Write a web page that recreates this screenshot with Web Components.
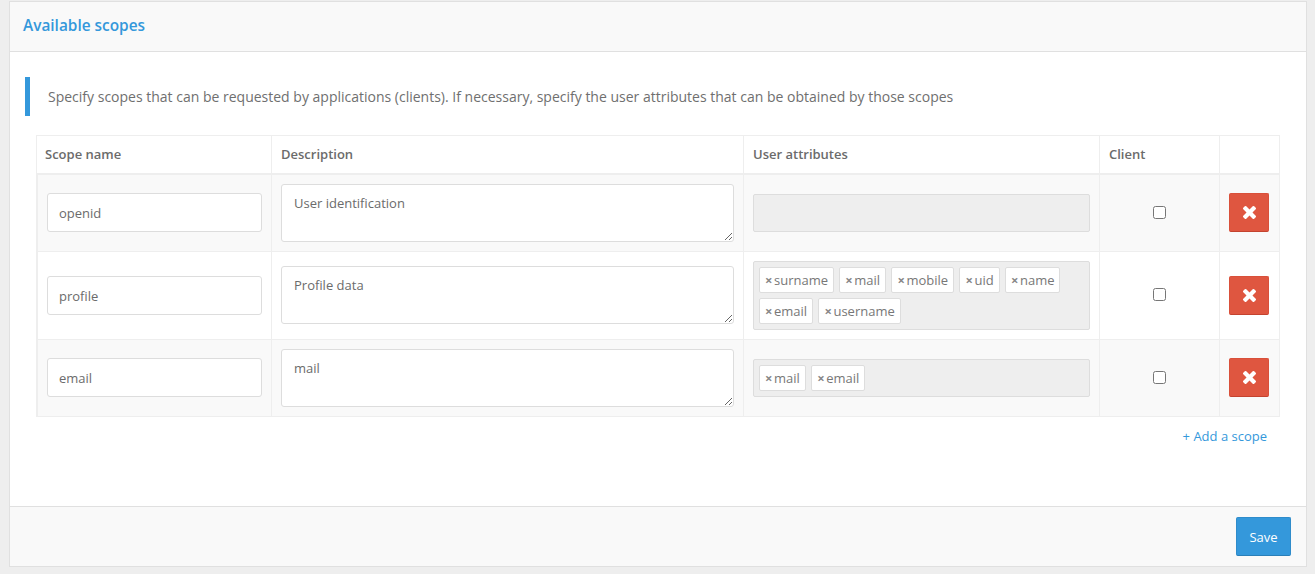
<!DOCTYPE html>
<html>
<head>
<meta charset="utf-8">
<title>Available scopes</title>
<style>
  html, body { margin: 0; background: #eee; }
  body { padding: 1px 8px 0 9px; height: 573px; box-sizing: border-box; overflow: hidden; font: 13px "Open Sans", sans-serif; color: #6b6b6b; }
</style>
</head>
<body>
<scope-panel heading="Available scopes">
  <scope-callout>Specify scopes that can be requested by applications (clients). If necessary, specify the user attributes that can be obtained by those scopes</scope-callout>
  <scope-table>
    <scope-row name="openid" description="User identification" height="77" striped></scope-row>
    <scope-row name="profile" description="Profile data" attrs="surname,mail,mobile,uid,name,email,username" height="88" tall></scope-row>
    <scope-row name="email" description="mail" attrs="mail,email" height="76" striped></scope-row>
  </scope-table>
  <a slot="link" href="#">+ Add a scope</a>
  <button slot="footer">Save</button>
</scope-panel>

<script>
const COLUMNS = "234px 472px 356px 120px 60px";

class ScopePanel extends HTMLElement {
  constructor() {
    super();
    this.attachShadow({ mode: "open" });
  }

  connectedCallback() {
    this.shadowRoot.innerHTML = `
    <style>
      :host {
        display: flex;
        flex-direction: column;
        height: 566px;
        box-sizing: border-box;
        border: 1px solid #e0e0e0;
        background: #fff;
      }
      header {
        height: 50px;
        box-sizing: border-box;
        flex: none;
        padding: 0 13px 2px;
        display: flex;
        align-items: center;
        background: #f9f9f9;
        border-bottom: 1px solid #e0e0e0;
        color: #3498db;
        font-size: 15.4px;
        font-weight: 600;
      }
      .body {
        flex: 1;
        padding: 25px 26px 0 15px;
      }
      .link {
        display: flex;
        justify-content: flex-end;
        padding: 10px 13px 0 0;
      }
      ::slotted(a) {
        color: #3498db;
        text-decoration: none;
        font-size: 13px;
      }
      footer {
        height: 60px;
        box-sizing: border-box;
        flex: none;
        display: flex;
        justify-content: flex-end;
        align-items: center;
        padding: 0 15px 0 0;
        background: #f9f9f9;
        border-top: 1px solid #e0e0e0;
      }
      ::slotted(button) {
        width: 55px;
        height: 39px;
        padding: 0;
        border: 1px solid #2f8ccb;
        border-bottom-color: #2a7fb8;
        border-radius: 2px;
        background: #3498db;
        color: #fff;
        font: 400 13px "Open Sans", sans-serif;
      }
    </style>
    <header>${this.getAttribute("heading")}</header>
    <div class="body">
      <slot></slot>
      <div class="link"><slot name="link"></slot></div>
    </div>
    <footer><slot name="footer"></slot></footer>`;
  }
}

class ScopeCallout extends HTMLElement {
  constructor() {
    super();
    this.attachShadow({ mode: "open" });
  }

  connectedCallback() {
    this.shadowRoot.innerHTML = `
    <style>
      :host {
        display: flex;
        align-items: center;
        height: 39px;
        box-sizing: border-box;
        border-left: 5px solid #3498db;
        padding-left: 18px;
        margin-bottom: 19px;
        color: #6f6f6f;
        font-size: 14px;
      }
    </style>
    <slot></slot>`;
  }
}

class ScopeTable extends HTMLElement {
  constructor() {
    super();
    this.attachShadow({ mode: "open" });
  }

  connectedCallback() {
    this.shadowRoot.innerHTML = `
    <style>
      :host {
        display: block;
        margin-left: 11px;
        width: 1244px;
        box-sizing: border-box;
        border: 1px solid #eee;
      }
      .head {
        display: grid;
        grid-template-columns: ${COLUMNS};
        height: 37px;
        border-bottom: 2px solid #eee;
        font-weight: 600;
        font-size: 13px;
        color: #6b6b6b;
      }
      .head div {
        display: flex;
        align-items: center;
        padding: 0 0 2px 9px;
        border-left: 1px solid #eee;
      }
      .head div:first-child { border-left: 0; padding-left: 8px; }
    </style>
    <div class="head">
      <div>Scope name</div>
      <div>Description</div>
      <div>User attributes</div>
      <div>Client</div>
      <div></div>
    </div>
    <slot></slot>`;
  }
}

class ScopeRow extends HTMLElement {
  constructor() {
    super();
    this.attachShadow({ mode: "open" });
  }

  connectedCallback() {
    const attrs = (this.getAttribute("attrs") || "").split(",").filter(Boolean);
    const tags = attrs.map(a => `<scope-tag>${a}</scope-tag>`).join("");
    this.shadowRoot.innerHTML = `
    <style>
      :host {
        display: grid;
        grid-template-columns: ${COLUMNS};
        height: ${this.getAttribute("height")}px;
        box-sizing: border-box;
        border-bottom: 1px solid #eee;
        background: ${this.hasAttribute("striped") ? "#f9f9f9" : "#fff"};
      }
      :host(:last-child) { border-bottom: 0; }
      .cell {
        display: flex;
        align-items: center;
        padding: 0 9px;
        border-left: 1px solid #eee;
      }
      .cell:first-child { border-left: 0; }
      /* cells sit a pixel off centre depending on the row height */
      .name, .action, .client { padding-bottom: 2px; }
      :host([tall]) .name, :host([tall]) .action { padding-bottom: 0; }
      :host([tall]) .desc { padding-bottom: 2px; }
      .client { justify-content: center; }
      .action { justify-content: flex-start; }
      input, textarea {
        box-sizing: border-box;
        width: 100%;
        border: 1px solid #ddd;
        border-radius: 3px;
        background: #fff;
        color: #6b6b6b;
        font: 13px "Open Sans", sans-serif;
        outline: 0;
      }
      input { height: 39px; padding: 2px 11px 0; }
      :host([tall]) input { padding-top: 0; }
      textarea { display: block; height: 58px; padding: 9px 12px; resize: both; }
      .tags {
        box-sizing: border-box;
        width: 100%;
        min-height: 38px;
        display: flex;
        flex-wrap: wrap;
        align-content: flex-start;
        gap: 5px 5.3px;
        padding: 5px;
        border: 1px solid #ddd;
        border-radius: 2px;
        background: #eee;
      }
      input.check { width: 13px; height: 13px; margin: 0; padding: 0; }
      .del {
        width: 40px;
        height: 39px;
        display: flex;
        align-items: center;
        justify-content: center;
        padding: 0;
        border: 1px solid #d9503a;
        border-bottom-color: #c4432f;
        border-radius: 2px;
        background: #df5640;
      }
      .del svg { width: 13px; height: 13px; fill: #fff; }
    </style>
    <div class="cell name"><input type="text" value="${this.getAttribute("name")}"></div>
    <div class="cell desc"><textarea>${this.getAttribute("description")}</textarea></div>
    <div class="cell"><div class="tags">${tags}</div></div>
    <div class="cell client"><input class="check" type="checkbox"></div>
    <div class="cell action">
      <button class="del" aria-label="Delete">
        <svg viewBox="110 366 1188 1188"><path d="M1298 1322q0 40-28 68l-136 136q-28 28-68 28t-68-28l-294-294-294 294q-28 28-68 28t-68-28l-136-136q-28-28-28-68t28-68l294-294-294-294q-28-28-28-68t28-68l136-136q28-28 68-28t68 28l294 294 294-294q28-28 68-28t68 28l136 136q28 28 28 68t-28 68l-294 294 294 294q28 28 28 68z"/></svg>
      </button>
    </div>`;
  }
}

class ScopeTag extends HTMLElement {
  constructor() {
    super();
    this.attachShadow({ mode: "open" });
  }

  connectedCallback() {
    this.shadowRoot.innerHTML = `
    <style>
      :host {
        display: inline-flex;
        align-items: center;
        height: 26px;
        box-sizing: border-box;
        padding: 0 5px;
        border: 1px solid #ddd;
        border-radius: 2px;
        background: #fff;
        color: #777;
        font-size: 13px;
      }
      .x { width: 9px; color: #888; font-weight: 700; font-size: 13px; line-height: 1; }
    </style>
    <span class="x">×</span><slot></slot>`;
  }
}

customElements.define("scope-panel", ScopePanel);
customElements.define("scope-callout", ScopeCallout);
customElements.define("scope-table", ScopeTable);
customElements.define("scope-row", ScopeRow);
customElements.define("scope-tag", ScopeTag);
</script>
</body>
</html>
